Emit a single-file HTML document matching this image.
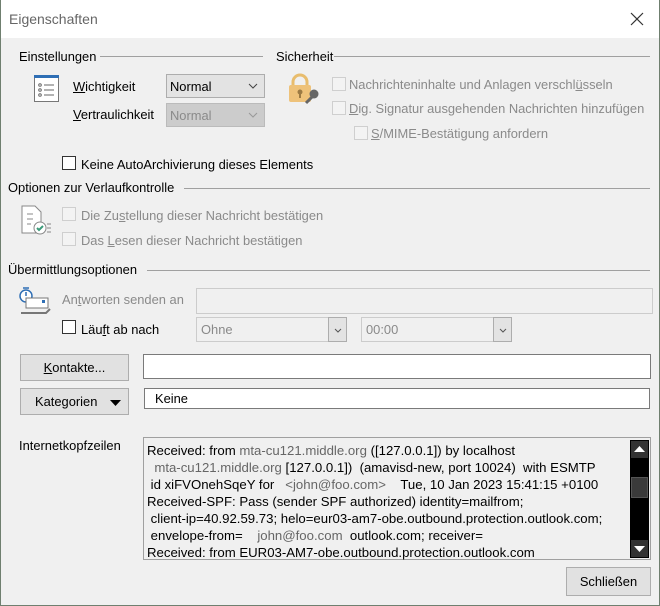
<!DOCTYPE html>
<html><head><meta charset="utf-8"><style>
*{box-sizing:border-box;margin:0;padding:0}
body{width:660px;height:606px;background:#f0f0f0;font-family:"Liberation Sans",sans-serif;font-size:12.9px;color:#000;position:relative;overflow:hidden}
.a{position:absolute;white-space:nowrap;line-height:16px}
.g{color:#8a8a8a}
.ln{position:absolute;height:1px;background:#a0a0a0}
.cb{position:absolute;width:14px;height:14px;background:#fff;border:1px solid #333}
.cb.d{border-color:#cfcfcf;background:#f3f3f3}
.box{position:absolute;border:1px solid #adadad;background:#e3e3e3}
.inp{position:absolute;border:1px solid #7a7a7a;background:#fff}
.btn{position:absolute;border:1px solid #adadad;background:#e1e1e1;text-align:center}
u{text-decoration:underline}
</style></head><body>
<div style="position:absolute;left:0;top:0;width:660px;height:38px;background:#fff"></div>
<div style="position:absolute;left:0;top:0;width:660px;height:606px;border:1px solid #6f7f6f;border-top:none"></div>
<div class="a" style="left:9px;top:11px;font-size:14px;color:#666">Eigenschaften</div>
<svg style="position:absolute;left:630px;top:12px" width="14" height="14"><path d="M1 1L13 13M13 1L1 13" stroke="#333" stroke-width="1.2"/></svg>

<div class="a" style="left:19px;top:49px">Einstellungen</div><div class="ln" style="left:100px;top:56px;width:163px"></div>
<div class="a" style="left:276px;top:49px">Sicherheit</div><div class="ln" style="left:334px;top:56px;width:316px"></div>

<svg style="position:absolute;left:34px;top:75px" width="25" height="27"><rect x="0.5" y="0.5" width="24" height="26" fill="#fff" stroke="#777"/><rect x="0" y="0" width="25" height="3" fill="#2f6fb5"/><g stroke="#666"><circle cx="6" cy="10" r="1.3" fill="none"/><circle cx="6" cy="15" r="1.3" fill="none"/><circle cx="6" cy="20" r="1.3" fill="none"/><path d="M10 10H20M10 15H20M10 20H20"/></g></svg>
<div class="a" style="left:73px;top:79px"><u>W</u>ichtigkeit</div>
<div class="box" style="left:166px;top:74px;width:99px;height:24px"><span class="a" style="left:3px;top:4px">Normal</span><svg style="position:absolute;left:81px;top:8px" width="10" height="6"><path d="M1 1L5 5L9 1" stroke="#444" fill="none"/></svg></div>
<div class="a" style="left:73px;top:107px"><u>V</u>ertraulichkeit</div>
<div class="box" style="left:166px;top:103px;width:99px;height:24px;background:#ccc;border-color:#bbb"><span class="a g" style="left:3px;top:4px">Normal</span><svg style="position:absolute;left:81px;top:8px" width="10" height="6"><path d="M1 1L5 5L9 1" stroke="#999" fill="none"/></svg></div>

<svg style="position:absolute;left:288px;top:73px" width="32" height="32"><path d="M5 12V9a7 7 0 0 1 14 0v3" stroke="#e8bd6e" stroke-width="3" fill="none"/><rect x="1" y="12" width="22" height="17" rx="2" fill="#eec27a"/><circle cx="12" cy="19" r="2.5" fill="#9b7a44"/><rect x="11" y="19" width="2" height="6" fill="#9b7a44"/><path d="M18 30l7-7" stroke="#666" stroke-width="3"/><circle cx="26" cy="21" r="4.5" fill="#666"/></svg>
<div class="cb d" style="left:332px;top:77px"></div><div class="a g" style="left:349px;top:77px">Nachrichteninhalte und Anlagen verschl<u>ü</u>sseln</div>
<div class="cb d" style="left:332px;top:101px"></div><div class="a g" style="left:349px;top:101px"><u>D</u>ig. Signatur ausgehenden Nachrichten hinzufügen</div>
<div class="cb d" style="left:354px;top:126px"></div><div class="a g" style="left:371px;top:126px"><u>S</u>/MIME-Bestätigung anfordern</div>

<div class="cb" style="left:62px;top:156px"></div><div class="a" style="left:81px;top:157px">Keine AutoArchivierung dieses Elements</div>

<div class="a" style="left:8px;top:180px">Optionen zur Verlaufkontrolle</div><div class="ln" style="left:184px;top:188px;width:466px"></div>
<svg style="position:absolute;left:20px;top:205px" width="32" height="32"><path d="M2 1H15L21 7V28H2Z" fill="#fff" stroke="#888"/><g stroke="#888"><path d="M7 9h6M7 14h6M7 19h4"/></g><circle cx="20" cy="23" r="6" fill="#fff" stroke="#888"/><path d="M17 23l2 2 4-4" stroke="#3c9b7a" stroke-width="2" fill="none"/><path d="M27 19h4M27 23h4M27 27h4" stroke="#888"/></svg>
<div class="cb d" style="left:62px;top:207px"></div><div class="a g" style="left:81px;top:208px">Die Zu<u>s</u>tellung dieser Nachricht bestätigen</div>
<div class="cb d" style="left:62px;top:232px"></div><div class="a g" style="left:81px;top:233px">Das <u>L</u>esen dieser Nachricht bestätigen</div>

<div class="a" style="left:8px;top:262px">Übermittlungsoptionen</div><div class="ln" style="left:147px;top:270px;width:503px"></div>
<svg style="position:absolute;left:18px;top:286px" width="34" height="30"><circle cx="8" cy="10" r="6" fill="#fff" stroke="#2f6fb5" stroke-width="1.5"/><path d="M8 10V6M5 2h6" stroke="#2f6fb5" stroke-width="1.5"/><rect x="8" y="12" width="22" height="10" fill="#fff" stroke="#777"/><rect x="24" y="14" width="3" height="3" fill="#2f6fb5"/><path d="M3 27h25l4-4" stroke="#777" stroke-width="2" fill="none"/></svg>
<div class="a g" style="left:62px;top:292px">An<u>t</u>worten senden an</div>
<div class="box" style="left:196px;top:288px;width:457px;height:26px;background:#f0f0f0;border-color:#ccc"></div>
<div class="cb" style="left:62px;top:320px"></div><div class="a" style="left:81px;top:322px">Läu<u>f</u>t ab nach</div>
<div class="box" style="left:196px;top:317px;width:133px;height:25px;background:#f0f0f0;border-color:#ccc"><span class="a g" style="left:4px;top:4px">Ohne</span></div>
<div class="box" style="left:328px;top:317px;width:19px;height:25px"><svg style="position:absolute;left:5px;top:10px" width="8" height="5"><path d="M1 1L4 4L7 1" stroke="#555" fill="none"/></svg></div>
<div class="box" style="left:361px;top:317px;width:133px;height:25px;background:#f0f0f0;border-color:#ccc"><span class="a g" style="left:4px;top:4px">00:00</span></div>
<div class="box" style="left:493px;top:317px;width:19px;height:25px"><svg style="position:absolute;left:5px;top:10px" width="8" height="5"><path d="M1 1L4 4L7 1" stroke="#555" fill="none"/></svg></div>

<div class="btn" style="left:20px;top:354px;width:109px;height:27px"><span class="a" style="left:0;right:0;top:5px"><u>K</u>ontakte...</span></div>
<div class="inp" style="left:143px;top:354px;width:508px;height:25px"></div>
<div class="btn" style="left:20px;top:388px;width:109px;height:27px"><span class="a" style="left:14px;top:5px">Kate<u>g</u>orien</span><svg style="position:absolute;left:89px;top:11px" width="11" height="6"><path d="M0 0H11L5.5 6Z" fill="#000"/></svg></div>
<div class="inp" style="left:144px;top:388px;width:506px;height:21px"><span class="a" style="left:10px;top:2px">Keine</span></div>

<div class="a" style="left:19px;top:438px">Internetkopfzeilen</div>
<div style="position:absolute;left:143px;top:437px;width:508px;height:123px;border:1px solid #a0a0a0;background:#f0f0f0"></div>
<div style="position:absolute;left:147px;top:442px;font-size:13.2px;line-height:17px;white-space:pre">Received: from <span style="color:#666">mta-cu121.middle.org</span> ([127.0.0.1]) by localhost
  <span style="color:#666">mta-cu121.middle.org</span> [127.0.0.1])  (amavisd-new, port 10024)  with ESMTP
 id xiFVOnehSqeY for   <span style="color:#666">&lt;john@foo.com&gt;</span>    Tue, 10 Jan 2023 15:41:15 +0100
Received-SPF: Pass (sender SPF authorized) identity=mailfrom;
 client-ip=40.92.59.73; helo=eur03-am7-obe.outbound.protection.outlook.com;
 envelope-from=    <span style="color:#666">john@foo.com</span>  outlook.com; receiver=
Received: from EUR03-AM7-obe.outbound.protection.outlook.com</div>
<div style="position:absolute;left:630px;top:440px;width:19px;height:118px;background:#000"></div>
<div style="position:absolute;left:631px;top:441px;width:17px;height:17px;background:#333"></div>
<svg style="position:absolute;left:634px;top:446px" width="11" height="6"><path d="M0 6H11L5.5 0Z" fill="#fff"/></svg>
<div style="position:absolute;left:631px;top:477px;width:17px;height:21px;background:#3a3a3a;border:1px solid #555"></div>
<div style="position:absolute;left:631px;top:540px;width:17px;height:17px;background:#333"></div>
<svg style="position:absolute;left:634px;top:546px" width="11" height="6"><path d="M0 0H11L5.5 6Z" fill="#fff"/></svg>

<div class="btn" style="left:566px;top:567px;width:85px;height:29px"><span class="a" style="left:0;right:0;top:6px">Schließen</span></div>
</body></html>
